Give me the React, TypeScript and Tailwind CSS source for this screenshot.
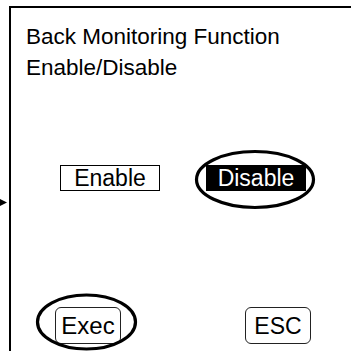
import React from "react";

export default function App() {
  return (
    <div
      className="relative w-[351px] h-[351px] overflow-hidden bg-white text-black"
      style={{ fontFamily: '"Liberation Sans", Arial, sans-serif' }}
    >
      <svg className="absolute left-0 top-[198px]" width="8" height="9" viewBox="0 0 8 9">
        <polygon points="0,1 7,4.5 0,8" fill="#000" />
      </svg>
      <div className="ml-[9px] mt-[6px] h-[345px] border-l-2 border-t-2 border-black flex flex-col">
        <div className="pl-[15px] pt-[13px] text-[22.5px] leading-[31px]">
          <div>Back Monitoring Function</div>
          <div>Enable/Disable</div>
        </div>
        <div className="mt-[82px] pl-[49px] flex gap-[46px]">
          <div className="w-[100px] h-[26px] border border-black flex items-center justify-center text-[23px] leading-[24px]">
            Enable
          </div>
          <div className="relative w-[100px] h-[26px] bg-black text-white flex items-center justify-center text-[23px] leading-[24px]">
            Disable
            <svg
              className="absolute left-[-15px] top-[-18px] overflow-visible"
              width="130"
              height="66"
              viewBox="0 0 130 66"
            >
              <ellipse cx="64" cy="32.5" rx="58.5" ry="28" fill="none" stroke="#000" strokeWidth="3.2" />
            </svg>
          </div>
        </div>
        <div className="mt-[116px] pl-[44px] flex gap-[124px]">
          <div className="relative w-[66px] h-[37px] rounded-[6px] border border-[#222] flex items-center justify-center text-[24px] leading-[26px]">
            Exec
            <svg
              className="absolute left-[-22px] top-[-16px] overflow-visible"
              width="105"
              height="62"
              viewBox="0 0 105 62"
            >
              <ellipse cx="52.5" cy="30" rx="49" ry="27" fill="none" stroke="#000" strokeWidth="3.2" />
            </svg>
          </div>
          <div className="w-[66px] h-[37px] rounded-[6px] border border-[#222] flex items-center justify-center text-[23px] leading-[26px]">
            ESC
          </div>
        </div>
      </div>
    </div>
  );
}
